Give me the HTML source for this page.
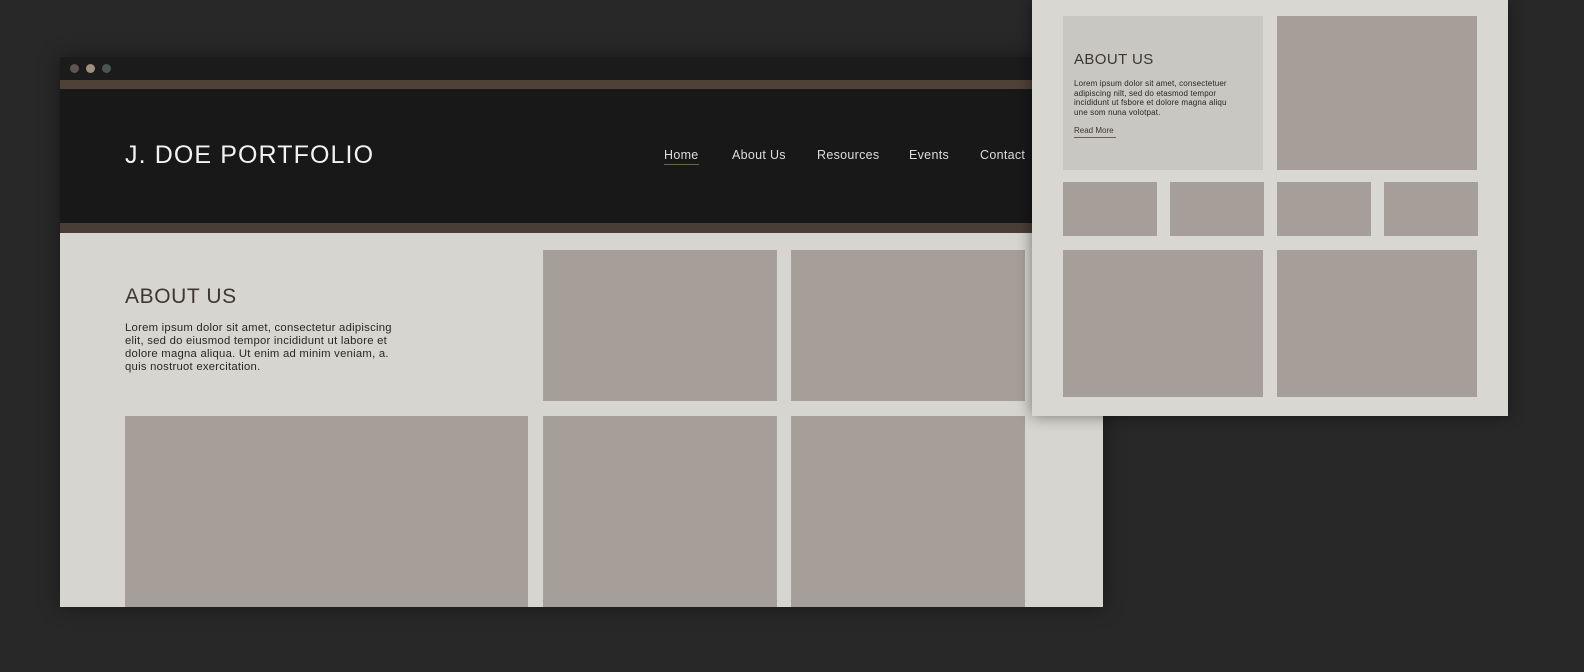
<!DOCTYPE html>
<html><head><style>
*{margin:0;padding:0;box-sizing:border-box}
body{width:1584px;height:672px;background:#282828;position:relative;overflow:hidden;font-family:"Liberation Sans",sans-serif}
.a{position:absolute}
.b{position:absolute;background:#a69f99}
</style></head><body>
<div class="a" style="left:60px;top:57px;width:1043px;height:550px;background:#d6d5d0;box-shadow:0 0 20px rgba(0,0,0,.4)"></div>
<div class="a" style="left:60px;top:57px;width:1043px;height:23px;background:#1b1b1b"></div>
<div class="a" style="left:70px;top:64px;width:9px;height:9px;border-radius:50%;background:#5e5452"></div>
<div class="a" style="left:86px;top:64px;width:9px;height:9px;border-radius:50%;background:#9e907c"></div>
<div class="a" style="left:102px;top:64px;width:9px;height:9px;border-radius:50%;background:#4a5650"></div>
<div class="a" style="left:60px;top:80px;width:1043px;height:9px;background:#4f4138"></div>
<div class="a" style="left:60px;top:89px;width:1043px;height:134px;background:#181818"></div>
<div class="a" style="left:60px;top:223px;width:1043px;height:10px;background:#4a3d35"></div>
<div class="a" style="left:125px;top:141px;color:#f2f2f2;font-size:25px;letter-spacing:1.1px">J. DOE PORTFOLIO</div>
<div class="a" style="left:664px;top:148px;color:#ddd;font-size:12.5px;letter-spacing:.3px">Home</div>
<div class="a" style="left:664px;top:164px;width:35px;height:1px;background:#6a6a4a"></div>
<div class="a" style="left:732px;top:148px;color:#ddd;font-size:12.5px;letter-spacing:.3px">About Us</div>
<div class="a" style="left:817px;top:148px;color:#ddd;font-size:12.5px;letter-spacing:.3px">Resources</div>
<div class="a" style="left:909px;top:148px;color:#ddd;font-size:12.5px;letter-spacing:.3px">Events</div>
<div class="a" style="left:980px;top:148px;color:#ddd;font-size:12.5px;letter-spacing:.3px">Contact</div>
<div class="a" style="left:125px;top:285px;color:#3f3630;font-size:21px;letter-spacing:.6px">ABOUT US</div>
<div class="a" style="left:125px;top:322px;width:285px;color:#2a2624;font-size:11.3px;line-height:13px;letter-spacing:.25px">Lorem ipsum dolor sit amet, consectetur adipiscing elit, sed do eiusmod tempor incididunt ut labore et dolore magna aliqua. Ut enim ad minim veniam, a. quis nostruot exercitation.</div>
<div class="b" style="left:543px;top:250px;width:234px;height:151px"></div>
<div class="b" style="left:791px;top:250px;width:234px;height:151px"></div>
<div class="b" style="left:125px;top:416px;width:403px;height:191px"></div>
<div class="b" style="left:543px;top:416px;width:234px;height:191px"></div>
<div class="b" style="left:791px;top:416px;width:234px;height:191px"></div>

<div class="a" style="left:1032px;top:0;width:476px;height:416px;background:#d8d7d2;box-shadow:0 0 14px rgba(0,0,0,.45)"></div>
<div class="a" style="left:1063px;top:16px;width:200px;height:154px;background:#c8c7c2"></div>
<div class="a" style="left:1074px;top:51px;color:#3f3630;font-size:15px;letter-spacing:.4px">ABOUT US</div>
<div class="a" style="left:1074px;top:79px;width:168px;color:#2a2624;font-size:8px;line-height:9.5px;letter-spacing:.15px">Lorem ipsum dolor sit amet, consectetuer adipiscing nilt, sed do etasmod tempor incididunt ut fsbore et dolore magna aliqu une som nuna volotpat.</div>
<div class="a" style="left:1074px;top:126px;color:#3f3630;font-size:8px">Read More</div>
<div class="a" style="left:1074px;top:137px;width:42px;height:1px;background:#6a6058"></div>
<div class="b" style="left:1277px;top:16px;width:200px;height:154px"></div>
<div class="b" style="left:1063px;top:182px;width:94px;height:54px"></div>
<div class="b" style="left:1170px;top:182px;width:94px;height:54px"></div>
<div class="b" style="left:1277px;top:182px;width:94px;height:54px"></div>
<div class="b" style="left:1384px;top:182px;width:94px;height:54px"></div>
<div class="b" style="left:1063px;top:250px;width:200px;height:147px"></div>
<div class="b" style="left:1277px;top:250px;width:200px;height:147px"></div>
</body></html>
